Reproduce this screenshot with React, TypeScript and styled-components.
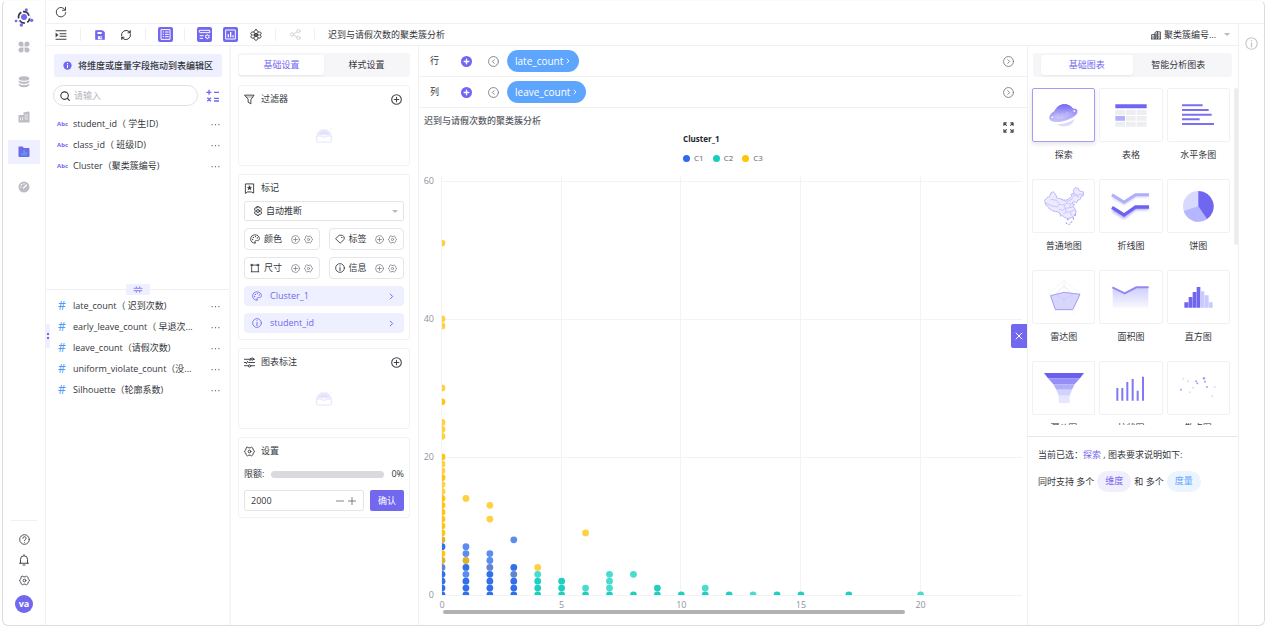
import React from "react";
import styled, { createGlobalStyle, css } from "styled-components";

const c = {
  primary: "#7267ef",
  tint: "#eef0ff",
  line: "#f0f0f2",
  text: "#34363c",
  blue: "#5ea6fd",
};

const GlobalStyle = createGlobalStyle`
  *, *::before, *::after { box-sizing: border-box; }
  body { margin: 0; background: #fff; color: ${c.text}; font: 9px/14px "Open Sans", "Noto Sans CJK SC", sans-serif; }
  button, input, select { font: inherit; color: inherit; margin: 0; }
  button { border: 0; background: none; padding: 0; cursor: pointer; }
  h1, h2, h3, p, ul { margin: 0; padding: 0; font-size: inherit; font-weight: inherit; }
  ul { list-style: none; }
  svg { display: block; flex: none; }
`;

/* ---------- frame ---------- */

const Frame = styled.div`
  display: flex;
  height: calc(100vh - 2px);
  min-height: 520px;
  margin: 0 2px 2px;
  border: 1px solid #dcdcde;
  border-top-color: #fbfbfb;
  border-radius: 6px;
  overflow: hidden;
`;

const Column = styled.div`
  display: flex;
  flex-direction: column;
  flex: 1;
  min-width: 0;
  min-height: 0;
`;

const Row = styled.div`
  display: flex;
  flex: 1;
  min-width: 0;
  min-height: 0;
`;

const SideNav = styled.nav`
  display: flex;
  flex-direction: column;
  align-items: center;
  width: 43px;
  padding: 6px 0 12px;
  border-right: 1px solid ${c.line};
`;

const NavList = styled.div`
  display: flex;
  flex-direction: column;
  gap: 11px;
  margin-top: 8px;
`;

const NavButton = styled.button<{ $active?: boolean }>`
  display: grid;
  place-items: center;
  width: 32px;
  height: 24px;
  border-radius: 2px;
  color: #bcbdc4;
  ${(p) => p.$active && css`background: ${c.tint}; color: ${c.primary};`}
`;

const NavFoot = styled.div`
  display: flex;
  flex-direction: column;
  align-items: center;
  gap: 9px;
  width: 26px;
  margin-top: auto;
  padding-top: 13px;
  border-top: 1px solid ${c.line};
`;

const IconButton = styled.button<{ $color?: string }>`
  display: grid;
  place-items: center;
  color: ${(p) => p.$color || "#43454b"};
`;

const Avatar = styled.button`
  width: 18px;
  height: 18px;
  border-radius: 50%;
  background: ${c.primary};
  color: #fff;
  font-weight: 700;
  line-height: 16px;
`;

const TopBar = styled.header`
  display: flex;
  align-items: center;
  height: 23px;
  padding-left: 9px;
  border-bottom: 1px solid ${c.line};
`;

const Toolbar = styled.div`
  display: flex;
  align-items: center;
  height: 22px;
  padding: 0 8px 0 2px;
  border-bottom: 1px solid ${c.line};
`;

const ToolButton = styled.button<{ $color?: string }>`
  display: grid;
  place-items: center;
  width: 26px;
  height: 20px;
  color: ${(p) => p.$color || "#3c3e44"};
`;

const Divider = styled.span`
  width: 1px;
  height: 13px;
  margin: 0 6px;
  background: ${c.line};
`;

const DocTitle = styled.h1`
  margin-left: 7px;
`;

const Rail = styled.aside`
  display: flex;
  flex-direction: column;
  align-items: center;
  width: 26px;
  padding-top: 13px;
  border-left: 1px solid ${c.line};
`;

const SourcePicker = styled.label`
  display: flex;
  align-items: center;
  gap: 3px;
  margin-left: auto;
  select { margin-right: 4px; }
`;

const PlainSelect = styled.select`
  flex: 1;
  min-width: 0;
  appearance: none;
  border: 0;
  padding: 0;
  outline: 0;
  background: none;
`;

const Caret = styled.span`
  border: 3px solid transparent;
  border-top-color: #b9bac0;
  border-bottom: 0;
`;

/* ---------- fields ---------- */

const Fields = styled.section`
  position: relative;
  display: flex;
  flex-direction: column;
  width: 185px;
  padding-top: 8px;
  border-right: 2px solid #f6f6f8;
`;

const Banner = styled.p`
  display: flex;
  align-items: center;
  gap: 6px;
  height: 23px;
  margin: 0 7px 0 8px;
  padding-left: 9px;
  border-radius: 2px;
  background: ${c.tint};
  font-weight: 500;
  white-space: nowrap;
`;

const SearchRow = styled.div`
  display: flex;
  align-items: center;
  gap: 8px;
  margin: 8px 9px 7px 7px;
`;

const SearchBox = styled.label`
  display: flex;
  align-items: center;
  gap: 4px;
  width: 145px;
  height: 21px;
  padding-left: 6px;
  border: 1px solid #dfe0e4;
  border-radius: 11px;
  input { width: 110px; border: 0; padding: 0; outline: 0; background: none; }
  input::placeholder { color: #b4b6be; }
`;

const FieldList = styled.ul<{ $grow?: boolean }>`
  flex: ${(p) => (p.$grow ? 1 : "none")};
  height: ${(p) => (p.$grow ? "auto" : "171px")};
  overflow: hidden;
`;

const FieldItem = styled.li`
  display: flex;
  align-items: center;
  height: 21px;
  padding: 0 9px 0 11px;
`;

const FieldKind = styled.span<{ $num?: boolean }>`
  width: 16px;
  color: ${(p) => (p.$num ? "#4c9bf5" : c.primary)};
  font-size: ${(p) => (p.$num ? "12px" : "6px")};
  padding-left: ${(p) => (p.$num ? "1px" : "0")};
  font-weight: ${(p) => (p.$num ? 400 : 700)};
`;

const FieldName = styled.span`
  flex: 1;
  min-width: 0;
  margin-right: 14px;
  overflow: hidden;
  text-overflow: ellipsis;
  white-space: pre;
`;

const Splitter = styled.div`
  display: flex;
  justify-content: center;
  align-items: center;
  height: 11px;
  background: linear-gradient(${c.line}, ${c.line}) center / 100% 1px no-repeat;
  span { display: grid; place-items: center; width: 24px; height: 11px; border-radius: 2px; background: ${c.tint}; }
`;

const SideHandle = styled.span`
  position: absolute;
  left: 0;
  top: 48%;
  display: grid;
  place-items: center;
  width: 4px;
  height: 24px;
  border-radius: 0 2px 2px 0;
  background: ${c.tint};
`;

/* ---------- settings ---------- */

const Settings = styled.section`
  display: flex;
  flex-direction: column;
  gap: 8px;
  width: 188px;
  padding: 7px 8px 0 7px;
  border-right: 1px solid ${c.line};
`;

const Tabs = styled.div<{ $wide?: boolean }>`
  display: flex;
  height: 24px;
  padding: ${(p) => (p.$wide ? "2px 8px" : "2px 1px")};
  border-radius: 3px;
  background: #f6f6f9;
`;

const Tab = styled.button<{ $active?: boolean }>`
  flex: 1;
  border-radius: 3px;
  ${(p) => p.$active && css`background: #fff; color: ${c.primary}; box-shadow: 0 1px 2px rgba(60, 60, 90, 0.08);`}
`;

const Card = styled.div`
  display: flex;
  flex-direction: column;
  gap: 7px;
  padding: 0 5px 6px;
  border: 1px solid #f2f2f4;
  border-radius: 3px;
`;

const CardHead = styled.header`
  display: flex;
  align-items: center;
  gap: 6px;
  height: 26px;
  margin-bottom: -7px;
  padding-right: 2px;
  h2 { flex: 1; }
`;

const EmptyState = styled.div`
  display: grid;
  place-items: center;
  height: 47px;
`;

const SelectBox = styled.label`
  display: flex;
  align-items: center;
  gap: 3px;
  height: 20px;
  padding: 0 5px 0 8px;
  border: 1px solid #e3e4e8;
  border-radius: 2px;
`;

const TileGrid = styled.div`
  display: grid;
  grid-template-columns: 1fr 1fr;
  gap: 7px 9px;
`;

const Tile = styled.div`
  display: flex;
  align-items: center;
  gap: 4px;
  height: 22px;
  padding: 0 6px 0 5px;
  border: 1px solid #e6e6ea;
  border-radius: 4px;
  > span { flex: 1; }
`;

const Chip = styled.button`
  display: flex;
  align-items: center;
  gap: 8px;
  height: 20px;
  padding: 0 9px 0 8px;
  border-radius: 4px;
  background: ${c.tint};
  color: ${c.primary};
  text-align: left;
  span { flex: 1; }
`;

const Quota = styled.label`
  display: flex;
  align-items: center;
  gap: 7px;
  margin: 3px 0 2px;
  progress { flex: 1; min-width: 0; height: 7px; appearance: none; border: 0; border-radius: 4px; overflow: hidden; }
  progress::-webkit-progress-bar { background: #dadade; }
  progress::-webkit-progress-value { background: ${c.primary}; }
`;

const LimitRow = styled.div`
  display: flex;
  gap: 6px;
`;

const Stepper = styled.div`
  display: flex;
  align-items: center;
  gap: 4px;
  flex: 1;
  min-width: 0;
  height: 21px;
  padding: 0 7px 0 6px;
  border: 1px solid #e3e4e8;
  border-radius: 2px;
  input { flex: 1; width: 0; min-width: 0; border: 0; padding: 0; outline: 0; background: none; }
`;

const Confirm = styled.button`
  flex: none;
  width: 34px;
  height: 21px;
  border-radius: 2px;
  background: ${c.primary};
  color: #fff;
`;

/* ---------- canvas ---------- */

const Canvas = styled.main`
  display: flex;
  flex-direction: column;
  flex: 1;
  min-width: 0;
`;

const Shelf = styled.div`
  display: flex;
  align-items: center;
  height: 31px;
  padding: 0 13px 0 11px;
  border-bottom: 1px solid ${c.line};
`;

const ShelfName = styled.span`
  width: 31px;
`;

const ShelfArrow = styled(IconButton)`
  margin: 0 8px 0 16px;
`;

const ShelfEnd = styled(IconButton)`
  margin-left: auto;
`;

const MeasurePill = styled.button`
  display: flex;
  align-items: center;
  gap: 2px;
  height: 22px;
  padding: 0 8px 1px;
  border-radius: 11px;
  background: ${c.blue};
  color: #fff;
  font-size: 10px;
`;

const ChartHead = styled.header`
  display: flex;
  justify-content: space-between;
  height: 24px;
  padding: 6px 13px 0 5px;
  font-weight: 500;
  color: #5b5d66;
`;

const FullscreenButton = styled(IconButton)`
  height: 27px;
`;

const Legend = styled.div`
  align-self: center;
  font-size: 8px;
  color: #62656e;
  h3 { margin-bottom: 5px; font-weight: 700; color: #24262b; }
  ul { display: flex; gap: 9px; }
  li { display: flex; align-items: center; gap: 4px; }
`;

const Dot = styled.i<{ $color: string }>`
  width: 7px;
  height: 7px;
  border-radius: 50%;
  background: ${(p) => p.$color};
`;

const Plot = styled.svg`
  flex: 1;
  width: 100%;
  min-height: 0;
  text { font-size: 9px; fill: #8f93a3; }
`;

/* ---------- gallery ---------- */

const Gallery = styled.aside`
  position: relative;
  display: flex;
  flex-direction: column;
  width: 211px;
  padding-top: 7px;
  border-left: 1px solid ${c.line};
`;

const TabWrap = styled.div`
  margin: 0 6px 11px 5px;
`;

const CloseTab = styled.button`
  position: absolute;
  left: -17px;
  top: 278px;
  display: grid;
  place-items: center;
  width: 16px;
  height: 24px;
  border-radius: 2px 0 0 2px;
  background: ${c.primary};
  color: #fff;
`;

const GalleryScroll = styled.div`
  display: flex;
  height: 337px;
  margin-bottom: 11px;
  overflow: hidden;
`;

const GalleryGrid = styled.div`
  display: grid;
  flex: 1;
  grid-template-columns: repeat(3, 1fr);
  grid-auto-rows: 91px;
  column-gap: 4px;
  padding: 0 3px 0 4px;
`;

const Thumb = styled.span<{ $active?: boolean }>`
  display: grid;
  place-items: center;
  height: 54px;
  margin-bottom: 6px;
  border: 1px solid ${(p) => (p.$active ? "#a49cf5" : "#f1f1f4")};
  border-radius: 2px;
  ${(p) => p.$active && css`box-shadow: 0 2px 5px rgba(60, 60, 90, 0.14);`}
`;

const ChartChoice = styled.button`
  display: block;
  align-self: start;
`;

const ScrollThumb = styled.span`
  width: 4px;
  height: 157px;
  margin-left: 1px;
  border-radius: 2px;
  background: #ededf0;
`;

const Requirements = styled.section`
  display: flex;
  flex-direction: column;
  gap: 9px;
  padding: 11px 10px;
  border-top: 1px solid #e6e6ea;
  white-space: pre;
  a { color: ${c.primary}; text-decoration: none; }
  p { display: flex; align-items: center; }
`;

const Tag = styled.span<{ $blue?: boolean }>`
  height: 21px;
  margin: 0 3px;
  padding: 0 8px;
  border-radius: 11px;
  line-height: 20px;
  background: ${(p) => (p.$blue ? "#ecf5ff" : "#f1effd")};
  color: ${(p) => (p.$blue ? c.blue : c.primary)};
`;

/* ---------- icons ---------- */

type GlyphProps = { size?: number; box?: string; sw?: number; children: React.ReactNode };
const Glyph = ({ size = 12, box = "0 0 24 24", sw = 2, children }: GlyphProps) => (
  <svg width={size} height={size} viewBox={box} fill="none" stroke="currentColor" strokeWidth={sw} strokeLinecap="round" strokeLinejoin="round" aria-hidden="true">
    {children}
  </svg>
);

const Logo = () => (
  <Glyph size={20} box="0 0 60 60" sw={0}>
    <g fill="none" strokeLinecap="butt">
      <path d="M14 34a17 17 0 0 1 8-18M27 14a17 17 0 0 1 18 12M47 34a17 17 0 0 1-7 12M33 48a17 17 0 0 1-16-8" stroke="#33343c" strokeWidth="5" />
      <path d="M7 39l17 11M38 7l14 28" stroke="#b9b3f7" strokeWidth="1.5" />
    </g>
    <g fill={c.primary}>
      <circle cx="30" cy="30" r="9" /><circle cx="37" cy="8" r="4.5" /><circle cx="53" cy="40" r="5" /><circle cx="6" cy="42" r="4" /><circle cx="22" cy="54" r="5" />
    </g>
  </Glyph>
);
const Petals = () => (
  <Glyph size={12} sw={0}><g fill="currentColor">
    <path d="M6 1a5 5 0 0 1 5 5v5H6A5 5 0 0 1 6 1zM18 1a5 5 0 0 1 0 10h-5V6a5 5 0 0 1 5-5zM6 13h5v5a5 5 0 1 1-5-5zM13 13h5a5 5 0 1 1-5 5z" />
  </g></Glyph>
);
const Database = () => (
  <Glyph size={12} sw={0}><g fill="currentColor">
    <ellipse cx="12" cy="5" rx="10.5" ry="4.5" />
    <path d="M1.500 8.500c3 4 18 4 21 0v3.500c-2 5-19 5-21 0zM1.500 15c3 4 18 4 21 0v3.500c-2 5-19 5-21 0z" />
  </g></Glyph>
);
const Building = () => (
  <Glyph size={12} sw={0}>
    <path d="M1 8h10V3l10-2 2 1v21H1z" fill="currentColor" />
    <path d="M14 8h5M14 12h5M14 16h5M5 18v-4M9 18v-5" stroke="#fff" strokeWidth="1.4" />
  </Glyph>
);
const FolderChart = () => (
  <Glyph size={12} sw={0}>
    <path d="M1 3c0-1 .5-2 2-2h6l3 3h9c1 0 2 1 2 2v14c0 1-1 2-2 2H3c-1 0-2-1-2-2z" fill="currentColor" />
    <path d="M8 18v-3M12 18V9M16 18v-5" stroke="#34d6d0" strokeWidth="2" />
  </Glyph>
);
const Gauge = () => (
  <Glyph size={12} sw={0}>
    <circle cx="12" cy="12" r="11" fill="currentColor" />
    <path d="M11 14l6-6M5 12h1M12 5v1M7 7l.7.7" stroke="#fff" strokeWidth="2.400" />
  </Glyph>
);
const Help = () => (
  <Glyph size={11}><circle cx="12" cy="12" r="10.500" /><path d="M8.500 9.500a3.500 3.500 0 1 1 5 3c-1 .5-1.500 1-1.500 2M12 18v.1" /></Glyph>
);
const Bell = () => (
  <Glyph size={12}><path d="M3 18.500h18M5 18V10.500a7 7 0 0 1 14 0V18M12 3V1.500M10 22h4" /></Glyph>
);
const HexGear = ({ size = 12 }: { size?: number }) => (
  <Glyph size={size}>
    <path d="M7.500 2.500l3 1.500h3l3-1.500 3 2.500.5 3.500 2.500 2v3l-2.500 2-.5 3.500-3 2.500-3-1.500h-3l-3 1.500-3-2.500-.5-3.500-2.500-2v-3l2.500-2L4.500 5z" /><circle cx="12" cy="12" r="3" />
  </Glyph>
);
const Reload = () => (
  <Glyph size={12}><path d="M20.500 8A9.500 9.500 0 1 0 21.500 13M21 2.500V8.500H15" /></Glyph>
);
const Indent = () => (
  <Glyph size={12}><path d="M2 3.500h20M10 9.500h12M10 14.500h12M2 20.500h20" /><path d="M2 8.500l4.500 3.500L2 15.500z" fill="currentColor" strokeWidth="1" /></Glyph>
);
const Disk = () => (
  <Glyph size={10} sw={0}>
    <path d="M2 2h16l4 4v16H2z" fill="currentColor" stroke="currentColor" strokeWidth="3" />
    <path d="M6 5h10v4.500H6zM7 22v-7h10v7z" fill="#fff" /><path d="M12.500 16h3v4h-3z" fill={c.primary} />
  </Glyph>
);
const Sync = () => (
  <Glyph size={12}><path d="M3 14A9.500 9.500 0 0 1 19 5.500M21 10A9.500 9.500 0 0 1 5 18.500" /><path d="M21 3v5h-5zM3 21v-5h5z" fill="currentColor" strokeWidth="1" /></Glyph>
);
const SquareIcon = ({ children }: { children: React.ReactNode }) => (
  <Glyph size={15} box="0 0 45 45" sw={3}>
    <rect width="45" height="45" rx="6" fill={c.primary} stroke="none" />
    <g stroke="#fff" strokeLinecap="butt">{children}</g>
  </Glyph>
);
const SheetIcon = () => (
  <SquareIcon><rect x="9" y="8" width="27" height="29" /><path d="M14 15h4M21 15h11M14 22h4M21 22h11M14 29h4M21 29h11" /></SquareIcon>
);
const PanelGearIcon = () => (
  <SquareIcon><path d="M38 18V10H7v5M7 17h31M8 26h12M8 34h10" /><circle cx="31" cy="29" r="5" /><path d="M31 21v3M31 34v3M24 25l3 2M35 31l3 2M24 33l3-2M35 27l3-2" strokeWidth="2" /></SquareIcon>
);
const ChartBoxIcon = () => (
  <SquareIcon><rect x="8" y="9" width="29" height="27" /><path d="M16 31v-9M23 31V15M30 31v-6" strokeWidth="4" /></SquareIcon>
);
const Atom = () => (
  <Glyph size={12}><circle cx="12" cy="12" r="3.500" /><path d="M12 1.500c3 0 4 3 4 5 2-1 5-1 6 1s-1 4-2 4.500c2 1 3 3 2 4.500s-4 2-6 1c0 2-1 5-4 5s-4-3-4-5c-2 1-5 1-6-1s1-4 2-4.500c-2-1-3-3-2-4.500s4-2 6-1c0-2 1-5 4-5z" /><path d="M8 6.500l8 11M16 6.500l-8 11M5 12h14" strokeWidth="1.500" /></Glyph>
);
const Share = () => (
  <Glyph size={11}><circle cx="4.500" cy="12" r="3.500" /><circle cx="18.500" cy="4.500" r="3.500" /><circle cx="18.500" cy="19.500" r="3.500" /><path d="M8 10.500l7.500-4M8 13.500l7.500 4" /></Glyph>
);
const City = () => (
  <Glyph size={10} sw={2}><path d="M1.500 21V11h8v10M9.500 21V6l6-3v18M15.500 4.500h7V21M1 21.500h22M5 15v3M12.500 9v9M19 9v2M19 14v4" /></Glyph>
);
const Info = ({ size = 10, solid }: { size?: number; solid?: boolean }) =>
  solid ? (
    <Glyph size={size} sw={0}><circle cx="12" cy="12" r="11" fill={c.primary} /><path d="M12 11v6.500M12 6.500v.5" stroke="#fff" strokeWidth="2.600" /></Glyph>
  ) : (
    <Glyph size={size}><circle cx="12" cy="12" r="10.500" /><path d="M12 11v7M12 6.500v.3" strokeWidth="2.400" /></Glyph>
  );
const Search = () => (
  <Glyph size={10} sw={2.600}><circle cx="11" cy="11" r="9" /><path d="M18 18l4.500 4.500" /></Glyph>
);
const Calc = () => (
  <Glyph size={14} box="0 0 42 42" sw={4}><path d="M1 10h15M9 2v15M24 10h15M4 26l11 11M15 26L4 37M24 28h15M24 36h15" strokeLinecap="butt" /></Glyph>
);
const More = () => (
  <Glyph size={9} sw={0}><g fill="#5f6168"><circle cx="3" cy="15" r="1.700" /><circle cx="12" cy="15" r="1.700" /><circle cx="21" cy="15" r="1.700" /></g></Glyph>
);
const Funnel = () => (
  <Glyph size={11}><path d="M2 2.500h20L15 12v9.500l-6-3.500v-6z" /><path d="M5 6.500h14" strokeWidth="1" /></Glyph>
);
const Bookmark = () => (
  <Glyph size={11}><path d="M3 22V2h18v20l-5-2.500H8z" /><path d="M12 6l1.500 3 3 .5-2 2 .5 3-3-1.500L9 14.500l.5-3-2-2 3-.5z" fill="currentColor" strokeWidth="1" /></Glyph>
);
const Sliders = () => (
  <Glyph size={11}><path d="M1 5h12M20 5h3M1 12h3M10 12h13M1 19h8M15 19h8M14 3l-1 5M8 9.500l-3 5" /><circle cx="18" cy="4.500" r="2.500" /><circle cx="12" cy="19.500" r="2.500" /></Glyph>
);
const PlusCircle = ({ size = 11, sw = 2.400 }: { size?: number; sw?: number }) => (
  <Glyph size={size} sw={sw}><circle cx="12" cy="12" r="10.500" /><path d="M12 7v10M7 12h10" /></Glyph>
);
const PlusSolid = () => (
  <Glyph size={11} sw={3}><circle cx="12" cy="12" r="12" fill={c.primary} stroke="none" /><path d="M12 7v10M7 12h10" stroke="#fff" /></Glyph>
);
const ArrowCircle = ({ right }: { right?: boolean }) => (
  <Glyph size={11}><circle cx="12" cy="12" r="10.800" /><path d={right ? "M10.500 8l4 4-4 4" : "M13.500 8l-4 4 4 4"} /></Glyph>
);
const Gear = () => (
  <Glyph size={10} sw={2.400}><path d="M10 1.500h4l1 3 3-.5 2.500 3.500L19 10v4l2 2.500L18 20l-3-.5-1 3h-4l-1-3-3 .5-2.500-3.500L5 14v-4L3.500 7.500 6 4l3 .5z" /><circle cx="12" cy="12" r="3.500" /></Glyph>
);
const Palette = () => (
  <Glyph size={10}><path d="M12 21.500C6 22.500 1.500 18 1.500 12S6 2 12 2s10.500 4 10.500 9-4 5.500-7 4.500c-3-.5-4 2-3 3.500s1 2.200-.5 2.500z" /><path d="M6.500 13v.2M8 8v.2M13 6v.2M17.500 9.500v.2" strokeWidth="3" /></Glyph>
);
const TagIcon = () => (
  <Glyph size={10}><path d="M11 3h7l4 4v6l-9.500 9L2 12z" /><path d="M16.500 8v.2" strokeWidth="3" /></Glyph>
);
const SizeIcon = () => (
  <Glyph size={10}><path d="M8 5h8M3 21h18M4 9v12M20 9v12" /><g fill="currentColor" strokeWidth="1"><path d="M2.500 3h4v4h-4zM17.500 3h4v4h-4z" /></g></Glyph>
);
const Chevron = ({ size = 7 }: { size?: number }) => (
  <Glyph size={size} sw={3.400}><path d="M8 4l8 8-8 8" /></Glyph>
);
const EmptyBox = () => (
  <svg width="18" height="15" viewBox="0 0 54 45" fill="none" aria-hidden="true">
    <path d="M6 22l9-15c1-2 2-3 4-3h16c2 0 3 1 4 3l9 15z" fill="#ebeafd" />
    <path d="M5 24h14c1 5 15 5 16 0h14v14c0 2-1 4-4 4H9c-3 0-4-2-4-4z" fill="#fff" stroke="#d6d3fa" strokeWidth="2" />
    <path d="M5 22l8-13M49 22L41 9M2 12v1M50 4v2M46 2h2M18 12h18M15 17h24" stroke="#d6d3fa" strokeWidth="2" />
  </svg>
);
const Expand = () => (
  <Glyph size={11} sw={2.600}><path d="M2 8V2h6M16 2h6v6M22 16v6h-6M8 22H2v-6M3 3l5 5M21 3l-5 5M21 21l-5-5M3 21l5-5" strokeLinecap="butt" /></Glyph>
);
const Cross = () => (
  <Glyph size={8} sw={3}><path d="M3 3l18 18M21 3L3 21" /></Glyph>
);
const Minus = () => <Glyph size={8}><path d="M1 12h22" /></Glyph>;
const Plus = () => <Glyph size={8}><path d="M1 12h22M12 1v22" /></Glyph>;

/* ---------- gallery drawings ---------- */

const Art = ({ w, h, children }: { w: number; h: number; children: React.ReactNode }) => (
  <svg width={Math.round(w / 3)} height={Math.round(h / 3)} viewBox={`0 0 ${w} ${h}`} fill="none" aria-hidden="true">
    {children}
  </svg>
);

const PlanetArt = () => (
  <Art w={87} h={69}>
    <defs>
      <linearGradient id="dome" x1="0" y1="0" x2="0" y2="1"><stop offset="0" stopColor="#7468ee" /><stop offset="1" stopColor="#cfccfb" /></linearGradient>
      <linearGradient id="ring" x1="0" y1="0" x2="0" y2="1"><stop offset="0" stopColor="#7b70f0" /><stop offset="1" stopColor="#c9c5fb" /></linearGradient>
    </defs>
    <path d="M24 60c16 2 36-4 52-14-4 14-16 22-30 21-10 0-18-3-22-7z" fill="#dddbfd" />
    <path d="M16 22C24 8 33 1 46 1c12 0 20 5 26 13 10-1 15 4 13 12C81 40 44 56 18 54 4 53-1 46 1 38c2-7 8-12 15-16z" fill="url(#ring)" />
    <path d="M16 22C24 8 33 1 46 1c12 0 20 5 26 13 3 12-6 20-24 27-16 5-30 5-34-2-2-5 0-11 2-17z" fill="url(#dome)" />
    <g stroke="#c9c5fb" strokeWidth="1.5"><circle cx="27" cy="34" r="4" /><path d="M37 34l3-7 4 5-5 2M50 29l5-6 3 5z" /></g>
    <g fill="#f4f3ff"><circle cx="10" cy="40" r="3" /><circle cx="76" cy="21" r="3" /></g>
  </Art>
);
const TableArt = () => (
  <Art w={96} h={69}>
    <path d="M1 1h94v12H1z" fill="#7166ef" />
    <path d="M1 17h29v16H1zM33 17h29v16H33zM65 17h30v16H65zM33 36h29v14H33zM65 36h30v14H65zM1 53h29v15H1zM33 53h29v15H33zM65 53h30v15H65z" fill="#eeeef2" />
    <path d="M1 36h29v14H1z" fill="#b3b1fd" />
  </Art>
);
const BarsArt = () => (
  <Art w={96} h={66}>
    <path d="M0 4h62M0 18h80M0 32h89M0 46h53M0 60h96" stroke="#7a70f1" strokeWidth="6" />
  </Art>
);
const MapArt = () => (
  <Art w={123} h={120}>
    <path d="M5 43l7-8 8-4 3-10 8-4 8 10 2 9 11 2 8 4 11 0 10-6 6-6-3-5 9-3-2-9 6-8 9 2 3 8 13 3 0 10-8 4-2 8-7 2-4 8-10-3-5 6 9 2-4 6 7 11 1 8-6 10-10 6-10 2-8-4-6-5-7 1-1-9-9-4-12-2-10-6-6-8-6-4z" fill="#eceaff" stroke="#a29bf3" strokeWidth="2.500" strokeDasharray="6 1.500" strokeLinejoin="round" />
    <path d="M23 40l18 3 8 12-6 8-14-3-20-8M49 55l14 2 4 10-8 6-12-4M63 57l10-6 10 4-3 10-13 2M80 65l10-2M67 67l3 12-9 5M70 79l12-2 3 12M82 77l13-5M54 38l16 10 16-8 8-14 14 8M92 24l14 3 14-3" stroke="#b9b4f6" strokeWidth="2" />
    <path d="M74 97l1 6M69 109l3 5M90 94l2 7M87 106l-4 5M79 113l-1 4M96 84l2 5" stroke="#8c84f0" strokeWidth="3" />
  </Art>
);
const LinesArt = () => (
  <Art w={117} h={84}>
    <defs><filter id="soft" x="-20%" y="-40%" width="140%" height="200%"><feGaussianBlur stdDeviation="3" /></filter></defs>
    <path d="M4 14l35 20 35-22h39" stroke="#d3d2fd" strokeWidth="8" filter="url(#soft)" />
    <path d="M3 8l36 23 35-23h40" stroke="#b0aefc" strokeWidth="9" />
    <path d="M4 54l35 22 35-26h39" stroke="#b7b4fb" strokeWidth="9" filter="url(#soft)" />
    <path d="M3 46l36 23 35-24h40" stroke="#6e63ee" strokeWidth="10" />
  </Art>
);
const PieArt = () => (
  <Art w={93} h={93}>
    <circle cx="46" cy="46" r="46" fill="#d8d9ff" />
    <path d="M46 46L2 60a46 46 0 0 0 70 24z" fill="#b5b6ff" />
    <path d="M46 46V0a46 46 0 0 1 26 84z" fill="#7166ef" />
  </Art>
);
const RadarArt = () => (
  <Art w={108} h={111}>
    <path d="M54 4v56L4 42M54 60l50-18M54 60l32 46M54 60l-33 46M54 4L10 42l16 48h58l16-48z" stroke="#f1f1f6" strokeWidth="2" />
    <path d="M54 20L30 44M54 20l24 26v26l-24 20" stroke="#dcdaf8" strokeWidth="2" />
    <path d="M14 50l40-10 48 6-22 46H28z" fill="#d3d1fc" fillOpacity=".9" stroke="#a39df3" strokeWidth="3" />
    <path d="M30 48l24 12 26-12M54 60v20" stroke="#c5c1f8" strokeWidth="1.500" />
  </Art>
);
const AreaArt = () => (
  <Art w={111} h={66}>
    <defs><linearGradient id="area" x1="0" y1="0" x2="0" y2="1"><stop offset="0" stopColor="#cfcdfa" /><stop offset="1" stopColor="#f8f8ff" /></linearGradient></defs>
    <path d="M2 4l36 18L73 4h36v61H2z" fill="url(#area)" />
    <path d="M1 4l37 18L73 4h37" stroke="#9289f2" strokeWidth="6" />
  </Art>
);
const HistogramArt = () => (
  <Art w={87} h={63}>
    <path d="M1 46h12v16H1zM14 30h11v32H14zM26 15h11v47H26zM38 0h11v62H38z" fill="#7166ef" />
    <path d="M50 13h11v49H50zM62 25h12v37H62zM75 46h11v16H75z" fill="#c9caff" />
  </Art>
);
const FunnelArt = () => (
  <Art w={120} h={90}>
    <path d="M0 0h120l-12 16H12z" fill="#6b60ee" /><path d="M12 16h96L92 34H28z" fill="#9690f6" />
    <path d="M28 34h64L84 50H37z" fill="#b0aefb" /><path d="M37 50h47l-7 18H44z" fill="#d2d2fe" />
    <path d="M44 68h33v22H44z" fill="#e6e6ff" />
  </Art>
);
const ColumnsArt = () => (
  <Art w={87} h={75}>
    <path d="M4 74V36M19 74V36M34 74V18M50 74V9M65 74V44M81 74V2" stroke="#8178f2" strokeWidth="6" />
  </Art>
);
const ScatterArt = () => (
  <Art w={108} h={66}>
    <g fill="#a7a1f6">
      <circle cx="3" cy="38" r="3" /><circle cx="48" cy="13" r="3" /><circle cx="52" cy="19" r="3" /><circle cx="72" cy="4" r="4" /><circle cx="75" cy="14" r="3" /><circle cx="81" cy="30" r="3" />
    </g>
    <g fill="#dedbfc">
      <circle cx="10" cy="5" r="3" /><circle cx="24" cy="13" r="3" /><circle cx="39" cy="32" r="3" /><circle cx="29" cy="46" r="3" /><circle cx="97" cy="58" r="3" /><circle cx="104" cy="30" r="3" />
    </g>
  </Art>
);

/* ---------- data ---------- */

const dimensions = ["student_id（ 学生ID)", "class_id（ 班级ID)", "Cluster（聚类簇编号)"];
const measures = ["late_count（ 迟到次数)", "early_leave_count（ 早退次...", "leave_count（请假次数)", "uniform_violate_count（没...", "Silhouette（轮廓系数)"];

const choices: [string, React.FC][] = [
  ["探索", PlanetArt], ["表格", TableArt], ["水平条图", BarsArt],
  ["普通地图", MapArt], ["折线图", LinesArt], ["饼图", PieArt],
  ["雷达图", RadarArt], ["面积图", AreaArt], ["直方图", HistogramArt],
  ["漏斗图", FunnelArt], ["柱状图", ColumnsArt], ["散点图", ScatterArt],
];

const palette = { C1: "#2f6bee", C2: "#18cdc0", C3: "#fec40b" };
const shades: Record<string, string> = {
  b: "#5b8cf0", B: "#316fed", g: "#5f86cc", t: "#48dccf", T: "#1fd0c2", y: "#ffd140", Y: "#fec60f", o: "#dcb52f",
};

/* Each entry: x value, then "y value + shade" marks. */
const marks: [number, string][] = [
  [0, "51y 40y 39y 30y 28Y 25y 24y 23y 20Y 19y 18y 17Y 16y 15y 14Y 13Y 12Y 11Y 10Y 9Y 8o 7B 6Y 5o 4g 3B 2B 1B 0B"],
  [1, "14y 7b 6b 5o 4B 3b 2B 1B 0B"],
  [2, "13y 11y 6b 5b 4g 3B 2B 1B 0B"],
  [3, "8b 4B 3g 2B 1B 0B"],
  [4, "4y 3t 2T 1T 0T"],
  [5, "2T 1T 0T"],
  [6, "9y 1t 0T"],
  [7, "3t 2t 1t 0T"],
  [8, "3t 0T"],
  [9, "1T 0T"],
  [10, "0T"],
  [11, "1t 0T"],
  [12, "0T"], [13, "0t"], [14, "0T"], [15, "0T"], [17, "0T"], [20, "0t"],
];

const px = (v: number) => 23 + v * 23.93;
const py = (v: number) => 430 - v * 6.9;

const ScatterPlot = () => (
  <Plot viewBox="0 0 608 460" preserveAspectRatio="xMidYMin meet" role="img" aria-label="late_count / leave_count">
    <defs><clipPath id="plot-area"><path d="M23 0h580v430H23z" /></clipPath></defs>
    <g stroke="#f3f3f5">
      {[0, 20, 40, 60].map((v) => <path key={v} d={`M23 ${Math.round(py(v)) + 0.5}H603`} />)}
      {[0, 5, 10, 15, 20].map((v) => <path key={v} d={`M${Math.round(px(v)) - 0.5} 11V430`} />)}
    </g>
    <g clipPath="url(#plot-area)">
      {marks.map(([x, list]) => list.split(" ").map((m) => (
        <circle key={`${x}-${m}`} cx={px(x)} cy={py(parseInt(m, 10))} r="3.400" fill={shades[m.slice(-1)]} />
      )))}
    </g>
    {[0, 20, 40, 60].map((v) => <text key={v} x="15" y={py(v) + 3} textAnchor="end">{v}</text>)}
    {[0, 5, 10, 15, 20].map((v) => <text key={v} x={px(v)} y="443" textAnchor="middle">{v}</text>)}
    <rect x="24" y="445" width="462" height="4" rx="2" fill="#b1b1b1" />
  </Plot>
);

const Field = ({ name, num }: { name: string; num?: boolean }) => (
  <FieldItem>
    <FieldKind $num={num}>{num ? "#" : "Abc"}</FieldKind>
    <FieldName>{name}</FieldName>
    <IconButton aria-label="更多"><More /></IconButton>
  </FieldItem>
);

const MarkTile = ({ icon, label }: { icon: React.ReactNode; label: string }) => (
  <Tile>
    {icon}
    <span>{label}</span>
    <IconButton $color="#777982" aria-label={`${label}添加`}><PlusCircle size={9} sw={2} /></IconButton>
    <IconButton $color="#777982" aria-label={`${label}设置`}><HexGear size={9} /></IconButton>
  </Tile>
);

const MeasureShelf = ({ label, field }: { label: string; field: string }) => (
  <Shelf>
    <ShelfName>{label}</ShelfName>
    <IconButton aria-label="添加"><PlusSolid /></IconButton>
    <ShelfArrow $color="#7b7d86" aria-label="向左"><ArrowCircle /></ShelfArrow>
    <MeasurePill>{field}<Chevron size={6} /></MeasurePill>
    <ShelfEnd $color="#7b7d86" aria-label="向右"><ArrowCircle right /></ShelfEnd>
  </Shelf>
);

export default function App() {
  return (
    <>
      <GlobalStyle />
      <Frame>
        <SideNav>
          <Logo />
          <NavList>
            <NavButton aria-label="应用"><Petals /></NavButton>
            <NavButton aria-label="数据"><Database /></NavButton>
            <NavButton aria-label="资源"><Building /></NavButton>
            <NavButton $active aria-label="分析"><FolderChart /></NavButton>
            <NavButton aria-label="看板"><Gauge /></NavButton>
          </NavList>
          <NavFoot>
            <IconButton aria-label="帮助"><Help /></IconButton>
            <IconButton aria-label="通知"><Bell /></IconButton>
            <IconButton aria-label="系统设置"><HexGear size={11} /></IconButton>
            <Avatar>va</Avatar>
          </NavFoot>
        </SideNav>

        <Column>
          <TopBar><IconButton aria-label="刷新"><Reload /></IconButton></TopBar>
          <Row>
            <Column>
              <Toolbar>
                <ToolButton aria-label="缩进"><Indent /></ToolButton>
                <Divider />
                <ToolButton $color={c.primary} aria-label="保存"><Disk /></ToolButton>
                <ToolButton aria-label="同步"><Sync /></ToolButton>
                <Divider />
                <ToolButton aria-label="字段面板"><SheetIcon /></ToolButton>
                <Divider />
                <ToolButton aria-label="设置面板"><PanelGearIcon /></ToolButton>
                <ToolButton aria-label="图表面板"><ChartBoxIcon /></ToolButton>
                <ToolButton aria-label="模型"><Atom /></ToolButton>
                <Divider />
                <ToolButton $color="#cfd0d5" aria-label="分享"><Share /></ToolButton>
                <Divider />
                <DocTitle>迟到与请假次数的聚类簇分析</DocTitle>
                <SourcePicker>
                  <City />
                  <PlainSelect aria-label="数据源"><option>聚类簇编号...</option></PlainSelect>
                  <Caret />
                </SourcePicker>
              </Toolbar>

              <Row>
                <Fields>
                  <Banner><Info size={9} solid />将维度或度量字段拖动到表编辑区</Banner>
                  <SearchRow>
                    <SearchBox><Search /><input placeholder="请输入" aria-label="搜索字段" /></SearchBox>
                    <IconButton $color={c.primary} aria-label="计算字段"><Calc /></IconButton>
                  </SearchRow>
                  <FieldList>{dimensions.map((d) => <Field key={d} name={d} />)}</FieldList>
                  <Splitter>
                    <span>
                      <svg width="10" height="7" viewBox="0 0 30 21" stroke={c.primary} strokeWidth="2.400" aria-hidden="true">
                        <path d="M2 7h26M2 14h26M10 1v5M20 1v5M10 15v5M20 15v5" />
                      </svg>
                    </span>
                  </Splitter>
                  <FieldList $grow>{measures.map((m) => <Field key={m} name={m} num />)}</FieldList>
                  <SideHandle>
                    <svg width="2" height="6" viewBox="0 0 2 6" fill={c.primary} aria-hidden="true"><path d="M0 0h2v2H0zM0 4h2v2H0z" /></svg>
                  </SideHandle>
                </Fields>

                <Settings>
                  <Tabs><Tab $active>基础设置</Tab><Tab>样式设置</Tab></Tabs>
                  <Card>
                    <CardHead><Funnel /><h2>过滤器</h2><IconButton aria-label="添加过滤器"><PlusCircle /></IconButton></CardHead>
                    <EmptyState><EmptyBox /></EmptyState>
                  </Card>
                  <Card>
                    <CardHead><Bookmark /><h2>标记</h2></CardHead>
                    <SelectBox>
                      <Gear />
                      <PlainSelect aria-label="标记类型"><option>自动推断</option></PlainSelect>
                      <Caret />
                    </SelectBox>
                    <TileGrid>
                      <MarkTile icon={<Palette />} label="颜色" />
                      <MarkTile icon={<TagIcon />} label="标签" />
                      <MarkTile icon={<SizeIcon />} label="尺寸" />
                      <MarkTile icon={<Info size={10} />} label="信息" />
                    </TileGrid>
                    <Chip><Palette /><span>Cluster_1</span><Chevron /></Chip>
                    <Chip><Info size={10} /><span>student_id</span><Chevron /></Chip>
                  </Card>
                  <Card>
                    <CardHead><Sliders /><h2>图表标注</h2><IconButton aria-label="添加标注"><PlusCircle /></IconButton></CardHead>
                    <EmptyState><EmptyBox /></EmptyState>
                  </Card>
                  <Card>
                    <CardHead><HexGear size={11} /><h2>设置</h2></CardHead>
                    <Quota>限额:<progress value={0} max={100} />0%</Quota>
                    <LimitRow>
                      <Stepper>
                        <input defaultValue="2000" aria-label="限额数量" />
                        <IconButton aria-label="减少"><Minus /></IconButton>
                        <IconButton aria-label="增加"><Plus /></IconButton>
                      </Stepper>
                      <Confirm>确认</Confirm>
                    </LimitRow>
                  </Card>
                </Settings>

                <Canvas>
                  <MeasureShelf label="行" field="late_count" />
                  <MeasureShelf label="列" field="leave_count" />
                  <ChartHead>
                    <h2>迟到与请假次数的聚类簇分析</h2>
                    <FullscreenButton aria-label="全屏"><Expand /></FullscreenButton>
                  </ChartHead>
                  <Legend>
                    <h3>Cluster_1</h3>
                    <ul>
                      {Object.entries(palette).map(([name, color]) => <li key={name}><Dot $color={color} />{name}</li>)}
                    </ul>
                  </Legend>
                  <ScatterPlot />
                </Canvas>

                <Gallery>
                  <TabWrap><Tabs $wide><Tab $active>基础图表</Tab><Tab>智能分析图表</Tab></Tabs></TabWrap>
                  <GalleryScroll>
                    <GalleryGrid>
                      {choices.map(([label, Drawing], i) => (
                        <ChartChoice key={label}><Thumb $active={i === 0}><Drawing /></Thumb>{label}</ChartChoice>
                      ))}
                    </GalleryGrid>
                    <ScrollThumb />
                  </GalleryScroll>
                  <Requirements>
                    <p>当前已选：<a href="#explore">探索</a>{" , "}图表要求说明如下:</p>
                    <p>同时支持 多个<Tag>维度</Tag>和 多个<Tag $blue>度量</Tag></p>
                  </Requirements>
                  <CloseTab aria-label="关闭"><Cross /></CloseTab>
                </Gallery>
              </Row>
            </Column>
            <Rail><IconButton $color="#c3c4ca" aria-label="详情"><Info size={13} /></IconButton></Rail>
          </Row>
        </Column>
      </Frame>
    </>
  );
}
